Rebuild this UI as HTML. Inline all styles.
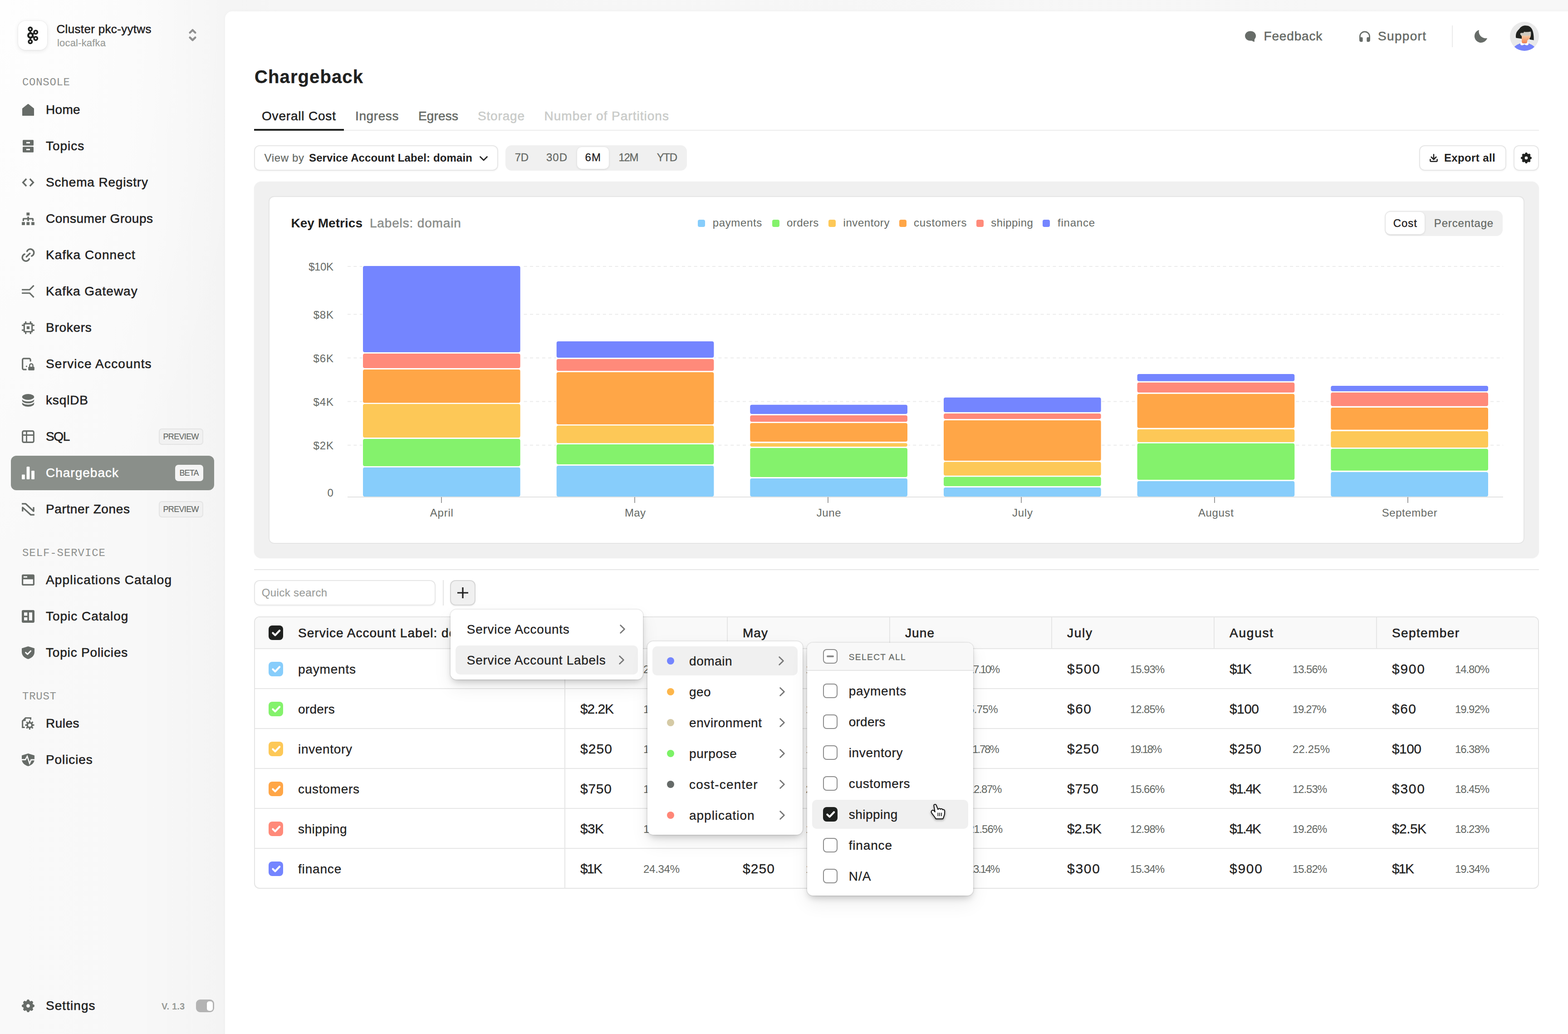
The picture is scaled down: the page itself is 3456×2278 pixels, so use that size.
<!DOCTYPE html>
<html lang="en"><head><meta charset="utf-8"><title>Chargeback</title><meta name="viewport" content="width=3456"><style>
*{box-sizing:border-box;margin:0;padding:0}
html{overflow:hidden;background:#f7f7f7}
body{width:3456px;height:2278px;overflow:hidden;background:#f7f7f7}
body{font-family:"Liberation Sans",sans-serif}
#app{position:relative;width:3456px;height:2278px;overflow:hidden;transform-origin:0 0;font-family:"Liberation Sans",sans-serif;background:radial-gradient(ellipse 560px 1300px at 0 0,#fefefe 0,rgba(254,254,254,0) 100%),linear-gradient(90deg,#f9f9f9 0,#f8f8f8 300px,#f5f5f5 440px,#f4f4f4 496px,#f6f6f6 620px,#f7f7f7 100%)}
.abs,.t,.ic{position:absolute}
.sb,.mp,.popups,nav,header,footer,section,.cluster,[role=table],[role=menu]{left:0;top:0;width:0;height:0}
.t{white-space:pre;line-height:1;font-weight:400;text-decoration:none;font-style:normal}
.ic{overflow:visible}
</style></head>
<body>
<div id="app">
<aside class="abs sb"><div class="abs cluster"><div class="abs" style="left:40px;top:46px;width:64px;height:64px;background:#fff;border-radius:16px;box-shadow:0 2px 10px rgba(0,0,0,.10),0 0 0 1px rgba(0,0,0,.03);"></div><svg class="ic" style="left:59px;top:58px" width="26" height="40" viewBox="0 0 26 40" ><g fill="none" stroke="#1f211f"><g stroke-width="3.6"><circle cx="7.8" cy="6.1" r="3.7"/><circle cx="7.8" cy="33.8" r="3.7"/><circle cx="19.7" cy="12.9" r="3.7"/><circle cx="19.7" cy="26.7" r="3.7"/></g><circle cx="8.2" cy="20" r="5" stroke-width="4.4"/><path stroke-width="3.4" d="M7.9 10 V14.8 M7.9 25.2 V30 M12.6 17.4 L16.6 15 M12.6 22.6 L16.6 24.8"/></g></svg><span class="t" style="left:124.5px;top:51.0px;font-size:26px;color:#1f211f;letter-spacing:0.33px;-webkit-text-stroke:0.52px #1f211f;">Cluster pkc-yytws</span><span class="t" style="left:126.0px;top:84.4px;font-size:22px;color:#979a97;letter-spacing:0.18px;-webkit-text-stroke:0.15px #979a97;">local-kafka</span><svg class="ic" style="left:415.5px;top:62.6px" width="17" height="28" viewBox="0 0 17 28" ><path d="M2.6 9 L8.5 3.2 L14.4 9 M2.6 19.6 L8.5 25.4 L14.4 19.6" fill="none" stroke="#8f8f8f" stroke-width="4.4" stroke-linecap="round" stroke-linejoin="round"/></svg></div><nav class="abs"><h6 class="t" style="left:49.0px;top:170.0px;font-size:24px;color:#8e908e;letter-spacing:0.7px;font-family:'Liberation Mono', monospace;">CONSOLE</h6><svg class="ic" style="left:48px;top:228px" width="28" height="28" viewBox="0 0 28 28" overflow="visible"><path d="M14 1.6 L26.3 11.2 V26.3 H1.7 V11.2 Z" fill="#676c68" stroke="#676c68" stroke-width="1.4" stroke-linejoin="round"/></svg><a class="t" style="left:101.0px;top:228.3px;font-size:28px;color:#1f211f;letter-spacing:0.3px;-webkit-text-stroke:0.56px #1f211f;">Home</a><svg class="ic" style="left:48px;top:308px" width="28" height="28" viewBox="0 0 28 28" overflow="visible"><path fill-rule="evenodd" fill="#676c68" d="M3.5 0.3h21a1.5 1.5 0 0 1 1.5 1.5v9.4a1.5 1.5 0 0 1-1.5 1.5h-21a1.5 1.5 0 0 1-1.5-1.5v-9.4a1.5 1.5 0 0 1 1.5-1.5z M10 4.8v3.2h8v-3.2z M3.5 15.3h21a1.5 1.5 0 0 1 1.5 1.5v9.4a1.5 1.5 0 0 1-1.5 1.5h-21a1.5 1.5 0 0 1-1.5-1.5v-9.4a1.5 1.5 0 0 1 1.5-1.5z M10 19.8v3.2h8v-3.2z"/></svg><a class="t" style="left:101.0px;top:308.3px;font-size:28px;color:#1f211f;letter-spacing:0.98px;-webkit-text-stroke:0.56px #1f211f;">Topics</a><svg class="ic" style="left:48px;top:388px" width="28" height="28" viewBox="0 0 28 28" overflow="visible"><path d="M10.2 6 L2.6 14 L10.2 22 M17.8 6 L25.4 14 L17.8 22" fill="none" stroke="#676c68" stroke-width="3.4" stroke-linecap="butt" stroke-linejoin="miter"/></svg><a class="t" style="left:101.0px;top:388.3px;font-size:28px;color:#1f211f;letter-spacing:0.84px;-webkit-text-stroke:0.56px #1f211f;">Schema Registry</a><svg class="ic" style="left:48px;top:468px" width="28" height="28" viewBox="0 0 28 28" overflow="visible"><g fill="#676c68"><rect x="10.4" y="0.3" width="6.8" height="6.4"/><rect x="12.3" y="9.1" width="3.5" height="9.8" rx="0.6"/><path d="M1.8 18.9 V14.4 a2.2 2.2 0 0 1 2.2 -2.2 H23.9 a2.2 2.2 0 0 1 2.2 2.2 V18.9 H22.9 V15.6 H5 V18.9 Z"/><rect x="0.1" y="21.2" width="6.8" height="6.7"/><rect x="10.4" y="21.2" width="6.8" height="6.7"/><rect x="21.1" y="21.2" width="6.8" height="6.7"/></g></svg><a class="t" style="left:101.0px;top:468.3px;font-size:28px;color:#1f211f;letter-spacing:0.52px;-webkit-text-stroke:0.56px #1f211f;">Consumer Groups</a><svg class="ic" style="left:48px;top:548px" width="28" height="28" viewBox="0 0 28 28" overflow="visible"><g fill="none" stroke="#676c68" stroke-width="3.4" stroke-linecap="round"><path d="M11.6 5.7 A7.9 7.9 0 1 1 21.7 16.1"/><path d="M16.4 22.3 A7.9 7.9 0 1 1 6.3 11.9"/><path d="M10.2 17.8 L17.8 10.2"/></g></svg><a class="t" style="left:101.0px;top:548.3px;font-size:28px;color:#1f211f;letter-spacing:1.09px;-webkit-text-stroke:0.56px #1f211f;">Kafka Connect</a><svg class="ic" style="left:48px;top:628px" width="28" height="28" viewBox="0 0 28 28" overflow="visible"><path d="M0.1 10.2 H17.4 L26.6 0.8 M0.1 17.7 H17.4 L26.6 27.1" fill="none" stroke="#676c68" stroke-width="3.1" stroke-linejoin="round"/></svg><a class="t" style="left:101.0px;top:628.3px;font-size:28px;color:#1f211f;letter-spacing:0.98px;-webkit-text-stroke:0.56px #1f211f;">Kafka Gateway</a><svg class="ic" style="left:48px;top:708px" width="28" height="28" viewBox="0 0 28 28" overflow="visible"><g fill="#676c68"><path fill-rule="evenodd" d="M5.3 3.6h17.4a1.5 1.5 0 0 1 1.5 1.5v17.6a1.5 1.5 0 0 1-1.5 1.5h-17.4a1.5 1.5 0 0 1-1.5-1.5v-17.6a1.5 1.5 0 0 1 1.5-1.5z M6.9 6.8v14.4h14.2v-14.4z"/><rect x="10.8" y="10.8" width="6.3" height="6.3"/><rect x="7.1" y="0.1" width="3.1" height="4.5"/><rect x="17.7" y="0.1" width="3.2" height="4.5"/><rect x="7.1" y="23.4" width="3.1" height="4.5"/><rect x="17.7" y="23.4" width="3.2" height="4.5"/><rect x="0.1" y="7.1" width="4.5" height="3.1"/><rect x="0.1" y="17.7" width="4.5" height="3.2"/><rect x="23.4" y="7.1" width="4.5" height="3.1"/><rect x="23.4" y="17.7" width="4.5" height="3.2"/></g></svg><a class="t" style="left:101.0px;top:708.3px;font-size:28px;color:#1f211f;letter-spacing:0.72px;-webkit-text-stroke:0.56px #1f211f;">Brokers</a><svg class="ic" style="left:48px;top:788px" width="28" height="28" viewBox="0 0 28 28" overflow="visible"><path d="M19.1 8.6 V4.6 a2.8 2.8 0 0 0 -2.8 -2.8 H4.5 a2.8 2.8 0 0 0 -2.8 2.8 V23.4 a2.8 2.8 0 0 0 2.8 2.8 H10.5" fill="none" stroke="#676c68" stroke-width="3.2"/><circle cx="10.4" cy="19.1" r="1.6" fill="#676c68"/><rect x="14.2" y="20" width="13.7" height="7.9" rx="1.6" fill="#676c68"/><path d="M17.4 20.6 V17 a3.55 3.55 0 0 1 7.1 0 V20.6" fill="none" stroke="#676c68" stroke-width="2.6"/></svg><a class="t" style="left:101.0px;top:788.3px;font-size:28px;color:#1f211f;letter-spacing:1.19px;-webkit-text-stroke:0.56px #1f211f;">Service Accounts</a><svg class="ic" style="left:48px;top:868px" width="28" height="28" viewBox="0 0 28 28" overflow="visible"><g fill="#676c68"><ellipse cx="14" cy="6.5" rx="13.2" ry="6.4"/><path d="M0.8 11.4 C2 14.6 8 16.4 14 16.4 S26 14.6 27.2 11.4 V14.4 C27.2 17.6 21.5 20.6 14 20.6 S0.8 17.6 0.8 14.4 Z"/><path d="M0.8 18.2 C2 21.5 8 23.4 14 23.4 S26 21.5 27.2 18.2 V21.4 C27.2 24.8 21.5 27.9 14 27.9 S0.8 24.8 0.8 21.4 Z"/></g></svg><a class="t" style="left:101.0px;top:868.3px;font-size:28px;color:#1f211f;letter-spacing:0.86px;-webkit-text-stroke:0.56px #1f211f;">ksqlDB</a><svg class="ic" style="left:48px;top:948px" width="28" height="28" viewBox="0 0 28 28" overflow="visible"><rect x="1.65" y="1.65" width="24.7" height="24.7" rx="2.8" fill="none" stroke="#676c68" stroke-width="3.1"/><path d="M1.7 10.5 H26.3 M10.5 1.7 V26.3" stroke="#676c68" stroke-width="2.8" fill="none"/></svg><a class="t" style="left:101.0px;top:948.3px;font-size:28px;color:#1f211f;letter-spacing:-1.37px;-webkit-text-stroke:0.56px #1f211f;">SQL</a><div class="abs" style="left:24px;top:1004px;width:448px;height:76px;background:#8a8f8a;border-radius:12px;"></div><svg class="ic" style="left:48px;top:1028px" width="28" height="28" viewBox="0 0 28 28" overflow="visible"><g fill="#fff"><rect x="0" y="17.4" width="6.8" height="10.6" rx="1.2"/><rect x="10.6" y="0" width="6.8" height="28" rx="1.6"/><rect x="21.2" y="9" width="6.8" height="19" rx="1.2"/></g></svg><a class="t" style="left:101.0px;top:1028.3px;font-size:28px;color:#fff;letter-spacing:1.0px;-webkit-text-stroke:0.56px #fff;">Chargeback</a><svg class="ic" style="left:48px;top:1108px" width="28" height="28" viewBox="0 0 28 28" overflow="visible"><path d="M0.1 1.8 H8.4 L26.1 18.2 V9.2 M1.8 18.8 V9.9 L19.8 26.2 H27.9" fill="none" stroke="#676c68" stroke-width="3.3" stroke-linejoin="round"/></svg><a class="t" style="left:101.0px;top:1108.3px;font-size:28px;color:#1f211f;letter-spacing:0.63px;-webkit-text-stroke:0.56px #1f211f;">Partner Zones</a><div class="abs" style="left:350px;top:944px;width:98px;height:36px;background:#f1f1f1;border-radius:7px;box-shadow:inset 0 0 0 2px #e4e4e4;"></div><span class="t" style="left:359.5px;top:953.2px;font-size:18px;color:#646864;letter-spacing:-0.67px;-webkit-text-stroke:0.15px #646864;">PREVIEW</span><div class="abs" style="left:386px;top:1024px;width:62px;height:36px;background:#f4f4f4;border-radius:7px;box-shadow:none;"></div><span class="t" style="left:395.5px;top:1033.2px;font-size:18px;color:#646864;letter-spacing:-0.9px;-webkit-text-stroke:0.15px #646864;">BETA</span><div class="abs" style="left:350px;top:1104px;width:98px;height:36px;background:#f1f1f1;border-radius:7px;box-shadow:inset 0 0 0 2px #e4e4e4;"></div><span class="t" style="left:359.5px;top:1113.2px;font-size:18px;color:#646864;letter-spacing:-0.67px;-webkit-text-stroke:0.15px #646864;">PREVIEW</span></nav><nav class="abs"><h6 class="t" style="left:49.0px;top:1207.0px;font-size:24px;color:#8e908e;letter-spacing:0.92px;font-family:'Liberation Mono', monospace;">SELF-SERVICE</h6><svg class="ic" style="left:48px;top:1264px" width="28" height="28" viewBox="0 0 28 28" overflow="visible"><path fill-rule="evenodd" fill="#676c68" d="M3 1.6h22a3 3 0 0 1 3 3v18.4a3 3 0 0 1-3 3h-22a3 3 0 0 1-3-3v-18.4a3 3 0 0 1 3-3z M3.2 12.2v10.6h21.6v-10.6z M3.9 5.4v3.2h8.1v-3.2z"/></svg><a class="t" style="left:101.0px;top:1264.3px;font-size:28px;color:#1f211f;letter-spacing:1.15px;-webkit-text-stroke:0.56px #1f211f;">Applications Catalog</a><svg class="ic" style="left:48px;top:1344px" width="28" height="28" viewBox="0 0 28 28" overflow="visible"><path fill-rule="evenodd" fill="#676c68" d="M3 0h22a3 3 0 0 1 3 3v22a3 3 0 0 1-3 3h-22a3 3 0 0 1-3-3v-22a3 3 0 0 1 3-3z M5 5.2v7.2h7.2v-7.2z M5 16v6.8h7.2v-6.8z M16 5.2v17.6h7v-17.6z"/></svg><a class="t" style="left:101.0px;top:1344.3px;font-size:28px;color:#1f211f;letter-spacing:0.97px;-webkit-text-stroke:0.56px #1f211f;">Topic Catalog</a><svg class="ic" style="left:48px;top:1424px" width="28" height="28" viewBox="0 0 28 28" overflow="visible"><path d="M14 0 L28 4.2 V12.5 C28 20 22.5 25.6 14 28 C5.5 25.6 0 20 0 12.5 V4.2 Z" fill="#676c68"/><path d="M8.6 13.6 L12.6 17.4 L19.6 10.2" fill="none" stroke="#fafafa" stroke-width="3" stroke-linecap="round" stroke-linejoin="round"/></svg><a class="t" style="left:101.0px;top:1424.3px;font-size:28px;color:#1f211f;letter-spacing:0.82px;-webkit-text-stroke:0.56px #1f211f;">Topic Policies</a></nav><nav class="abs"><h6 class="t" style="left:49.0px;top:1523.0px;font-size:24px;color:#8e908e;letter-spacing:0.75px;font-family:'Liberation Mono', monospace;">TRUST</h6><svg class="ic" style="left:48px;top:1580px" width="28" height="28" viewBox="0 0 28 28" overflow="visible"><path d="M19.5 5.6 V1.7 H8.3 L1.7 8.3 V22.5 H6.6" fill="none" stroke="#676c68" stroke-width="3.1" stroke-linejoin="miter"/><path d="M8.6 0.4 V8.6 H0.4 Z" fill="#676c68"/><path fill-rule="evenodd" d="M15.61 10.74 L16.05 7.29 L18.75 7.29 L19.19 10.74 L20.85 11.42 L23.60 9.30 L25.50 11.20 L23.38 13.95 L24.06 15.61 L27.51 16.05 L27.51 18.75 L24.06 19.19 L23.38 20.85 L25.50 23.60 L23.60 25.50 L20.85 23.38 L19.19 24.06 L18.75 27.51 L16.05 27.51 L15.61 24.06 L13.95 23.38 L11.20 25.50 L9.30 23.60 L11.42 20.85 L10.74 19.19 L7.29 18.75 L7.29 16.05 L10.74 15.61 L11.42 13.95 L9.30 11.20 L11.20 9.30 L13.95 11.42Z M20.90 17.40 a3.5 3.5 0 1 0 -7.00 0 a3.5 3.5 0 1 0 7.00 0Z" fill="#676c68"/></svg><a class="t" style="left:101.0px;top:1580.3px;font-size:28px;color:#1f211f;letter-spacing:0.5px;-webkit-text-stroke:0.56px #1f211f;">Rules</a><svg class="ic" style="left:48px;top:1660px" width="28" height="28" viewBox="0 0 28 28" overflow="visible"><path d="M14 0 L28 4.2 V12.5 C28 20 22.5 25.6 14 28 C5.5 25.6 0 20 0 12.5 V4.2 Z" fill="#676c68"/><path d="M-1 13.6 H8 L12 6.2 L17.2 21.6 L20.6 13.9 H29" fill="none" stroke="#fafafa" stroke-width="2.6" stroke-linejoin="miter"/></svg><a class="t" style="left:101.0px;top:1660.3px;font-size:28px;color:#1f211f;letter-spacing:0.89px;-webkit-text-stroke:0.56px #1f211f;">Policies</a></nav><footer class="abs"><svg class="ic" style="left:48px;top:2202px" width="28" height="28" viewBox="0 0 28 28" overflow="visible"><path fill-rule="evenodd" d="M10.76 3.80 L12.26 0.61 L15.74 0.61 L17.24 3.80 L18.92 4.50 L22.24 3.30 L24.70 5.76 L23.50 9.08 L24.20 10.76 L27.39 12.26 L27.39 15.74 L24.20 17.24 L23.50 18.92 L24.70 22.24 L22.24 24.70 L18.92 23.50 L17.24 24.20 L15.74 27.39 L12.26 27.39 L10.76 24.20 L9.08 23.50 L5.76 24.70 L3.30 22.24 L4.50 18.92 L3.80 17.24 L0.61 15.74 L0.61 12.26 L3.80 10.76 L4.50 9.08 L3.30 5.76 L5.76 3.30 L9.08 4.50Z M18.30 14.00 a4.3 4.3 0 1 0 -8.60 0 a4.3 4.3 0 1 0 8.60 0Z" fill="#676c68" stroke="#676c68" stroke-width="0.9" stroke-linejoin="round"/></svg><a class="t" style="left:101.0px;top:2202.3px;font-size:28px;color:#1f211f;letter-spacing:1.05px;-webkit-text-stroke:0.56px #1f211f;">Settings</a><span class="t" style="left:356.0px;top:2207.1px;font-size:20px;color:#979a97;font-weight:700;letter-spacing:0.12px;">V. 1.3</span><div class="abs" style="left:432px;top:2202px;width:40px;height:28px;background:#b3b3b3;border-radius:9px;"><i class="abs" style="left:23.5px;top:3.5px;width:13px;height:21px;border-radius:5px;background:#fff"></i></div></footer></aside><main class="abs mp"><div class="abs" style="left:496px;top:24.5px;width:2984px;height:2300px;background:#fff;border-radius:16px 0 0 0;box-shadow:0 0 10px rgba(0,0,0,.03);"></div><header class="abs"><svg class="ic" style="left:2744px;top:67.5px" width="25" height="25" viewBox="0 0 25 25" overflow="visible"><path d="M12.1 0.4 C19 0.4 24.1 5 24.1 11.1 C24.1 14 22.9 16.4 21.1 18.2 L20.7 24.4 L14.4 21.6 C13.7 21.7 12.9 21.8 12.1 21.8 C5.2 21.8 0.1 17.2 0.1 11.1 C0.1 5 5.2 0.4 12.1 0.4 Z" fill="#676c68"/></svg><a class="t" style="left:2785.5px;top:66.3px;font-size:28px;color:#666a66;letter-spacing:0.83px;-webkit-text-stroke:0.56px #666a66;">Feedback</a><svg class="ic" style="left:2996px;top:67.5px" width="24" height="25" viewBox="0 0 24 25" ><path d="M1.4 17 V12.4 a10.6 10.6 0 0 1 21.2 0 V17" fill="none" stroke="#676c68" stroke-width="2.7"/><path d="M0.1 13.9 H5.4 a2.2 2.2 0 0 1 2.2 2.2 V22.3 a2 2 0 0 1 -2 2 H4.1 a4 4 0 0 1 -4 -4 Z M23.9 13.9 H18.6 a2.2 2.2 0 0 0 -2.2 2.2 V22.3 a2 2 0 0 0 2 2 H19.9 a4 4 0 0 0 4 -4 Z" fill="#676c68"/></svg><a class="t" style="left:3037.0px;top:66.3px;font-size:28px;color:#666a66;letter-spacing:1.32px;-webkit-text-stroke:0.56px #666a66;">Support</a><div class="abs" style="left:3200px;top:56px;width:2px;height:48px;background:#ebebeb;"></div><svg class="ic" style="left:3250px;top:66px" width="28" height="28" viewBox="0 0 28 28" ><path d="M9.9 -0.1 A14.4 14.4 0 1 0 28 17.9 A15 15 0 0 1 9.9 -0.1 Z" fill="#676c68"/></svg><svg class="ic" style="left:3328px;top:48px" width="64" height="64" viewBox="0 0 64 64" ><defs><clipPath id="avc"><circle cx="32" cy="32" r="32"/></clipPath><linearGradient id="avg" x1="0" y1="0" x2="0" y2="1"><stop offset="0" stop-color="#f3c9a4"/><stop offset="1" stop-color="#f5814b"/></linearGradient></defs><circle cx="32" cy="32" r="32" fill="#e9e9e9"/><g clip-path="url(#avc)"><path d="M34.3 8.3 C41 8.3 46 11 48.5 16 C51.5 21.5 52.7 29 52.7 40.5 L44 39 L40 33 L27 37.5 L13.2 35.6 C12.6 31 13 26 15 22.5 C16.5 20 19 17.5 21 15.5 C23.5 11 28.5 8.3 34.3 8.3 Z" fill="#20221f"/><path d="M31 22.1 C36 23 41 22.6 46 21.6 C46.6 25.5 46.4 29 45.6 32.5 L26.5 32.5 C25 30 23.4 29.6 22.8 27.5 C22.4 25.8 23.4 24.6 25 24.6 L30 24.4 Z" fill="#cdc9c0"/><path d="M26 30.5 L45.6 30.5 C45.4 34 44 37 41.5 38.5 L38 41.5 L38 47.6 L26.2 47.6 Z" fill="url(#avg)"/><path d="M9.9 66 L9.9 55 C14 51.5 18 49.3 22.8 47.6 L41.2 47.6 C46 49.3 50 51.5 53.9 55 L53.9 66 Z" fill="#7482fb"/><path d="M23.6 44.8 L26.2 45.6 C26.6 47.2 28.4 48 32 48 C35.6 48 37.4 47.2 37.8 45.6 L40.4 44.8 C41.4 47.2 41.2 49.6 40.2 50.8 C38.2 52.4 35.2 52 32 49.8 C28.8 52 25.8 52.4 23.8 50.8 C22.8 49.6 22.6 47.2 23.6 44.8 Z" fill="#fdfdfd"/></g></svg><h1 class="t" style="left:561.0px;top:148.5px;font-size:40px;color:#1f211f;font-weight:700;letter-spacing:1.11px;-webkit-text-stroke:0.3px #1f211f;">Chargeback</h1></header><nav class="abs tabs"><div class="abs" style="left:560px;top:286px;width:2832px;height:2px;background:#ececec;"></div><div class="abs" style="left:560px;top:284px;width:198px;height:4px;background:#1f211f;"></div><a class="t" style="left:577.0px;top:242.3px;font-size:28px;color:#1f211f;letter-spacing:0.81px;-webkit-text-stroke:0.56px #1f211f;">Overall Cost</a><a class="t" style="left:783.0px;top:242.3px;font-size:28px;color:#666a66;letter-spacing:0.6px;-webkit-text-stroke:0.56px #666a66;">Ingress</a><a class="t" style="left:922.0px;top:242.3px;font-size:28px;color:#666a66;letter-spacing:0.17px;-webkit-text-stroke:0.56px #666a66;">Egress</a><a class="t" style="left:1053.0px;top:242.3px;font-size:28px;color:#c9cbc9;letter-spacing:0.82px;-webkit-text-stroke:0.56px #c9cbc9;">Storage</a><a class="t" style="left:1199.5px;top:242.3px;font-size:28px;color:#c9cbc9;letter-spacing:1.01px;-webkit-text-stroke:0.56px #c9cbc9;">Number of Partitions</a></nav><section class="abs toolbar"><div class="abs" style="left:560px;top:320px;width:538px;height:56px;background:#fff;border-radius:12px;box-shadow:inset 0 0 0 2px #e6e6e6,0 2px 3px rgba(0,0,0,.035);"></div><span class="t" style="left:582.5px;top:335.7px;font-size:24px;color:#666a66;letter-spacing:0.65px;-webkit-text-stroke:0.25px #666a66;">View by</span><span class="t" style="left:681.0px;top:335.7px;font-size:24px;color:#1f211f;font-weight:700;letter-spacing:0.12px;">Service Account Label: domain</span><svg class="ic" style="left:1057px;top:343.5px" width="18" height="10.5" viewBox="0 0 18 10.5" ><path d="M1.5 1.5 L9 9 L16.5 1.5" fill="none" stroke="#222" stroke-width="2.8" stroke-linecap="round" stroke-linejoin="round"/></svg><div class="abs" style="left:1114px;top:320px;width:400px;height:56px;background:#f0f0f0;border-radius:14px;"></div><div class="abs" style="left:1272px;top:324px;width:70px;height:48px;background:#fff;border-radius:10px;box-shadow:0 1px 4px rgba(0,0,0,.12);"></div><span class="t" style="left:1134.7px;top:335.3px;font-size:24px;color:#666a66;letter-spacing:-0.39px;-webkit-text-stroke:0.3px #666a66;">7D</span><span class="t" style="left:1204.0px;top:335.3px;font-size:24px;color:#666a66;letter-spacing:0.98px;-webkit-text-stroke:0.3px #666a66;">30D</span><b class="t" style="left:1289.5px;top:335.3px;font-size:24px;color:#1f211f;letter-spacing:1.16px;-webkit-text-stroke:0.3px #1f211f;">6M</b><span class="t" style="left:1363.5px;top:335.3px;font-size:24px;color:#666a66;letter-spacing:-1.29px;-webkit-text-stroke:0.3px #666a66;">12M</span><span class="t" style="left:1447.7px;top:335.3px;font-size:24px;color:#666a66;letter-spacing:-1.35px;-webkit-text-stroke:0.3px #666a66;">YTD</span><div class="abs" style="left:3128px;top:320px;width:192px;height:56px;background:#fff;border-radius:12px;box-shadow:inset 0 0 0 2px #e6e6e6,0 2px 3px rgba(0,0,0,.035);"></div><svg class="ic" style="left:3151px;top:339.5px" width="18" height="17" viewBox="0 0 18 17" ><path d="M9 0.4 V11 M3.7 6 L9 11.4 L14.3 6" fill="none" stroke="#222" stroke-width="2.6" stroke-linejoin="miter" stroke-linecap="round"/><path d="M1.4 11.2 V13.8 a2 2 0 0 0 2 2 H14.6 a2 2 0 0 0 2 -2 V11.2" fill="none" stroke="#222" stroke-width="2.6" stroke-linecap="round"/></svg><span class="t" style="left:3183.0px;top:335.7px;font-size:24px;color:#1f211f;font-weight:700;letter-spacing:0.36px;">Export all</span><div class="abs" style="left:3336px;top:320px;width:56px;height:56px;background:#fff;border-radius:12px;box-shadow:inset 0 0 0 2px #e6e6e6,0 2px 3px rgba(0,0,0,.035);"></div><svg class="ic" style="left:3352px;top:335.7px" width="24" height="24" viewBox="0 0 28 28" ><path fill-rule="evenodd" d="M10.76 3.80 L12.26 0.61 L15.74 0.61 L17.24 3.80 L18.92 4.50 L22.24 3.30 L24.70 5.76 L23.50 9.08 L24.20 10.76 L27.39 12.26 L27.39 15.74 L24.20 17.24 L23.50 18.92 L24.70 22.24 L22.24 24.70 L18.92 23.50 L17.24 24.20 L15.74 27.39 L12.26 27.39 L10.76 24.20 L9.08 23.50 L5.76 24.70 L3.30 22.24 L4.50 18.92 L3.80 17.24 L0.61 15.74 L0.61 12.26 L3.80 10.76 L4.50 9.08 L3.30 5.76 L5.76 3.30 L9.08 4.50Z M18.40 14.00 a4.4 4.4 0 1 0 -8.80 0 a4.4 4.4 0 1 0 8.80 0Z" fill="#1f211f" stroke="#1f211f" stroke-width="0.9" stroke-linejoin="round"/></svg></section><section class="abs chart"><div class="abs" style="left:560px;top:400px;width:2832px;height:830px;background:#f0f0f0;border-radius:16px;box-shadow:0 0 2px 0 #f0f0f0;"></div><div class="abs" style="left:592px;top:432px;width:2768px;height:766px;background:#fff;border-radius:12px;box-shadow:inset 0 0 0 2px #e5e5e5,inset 0 2px 0 0 #dedede;"></div><h3 class="t" style="left:641.4px;top:478.3px;font-size:28px;color:#1f211f;font-weight:700;letter-spacing:0.04px;">Key Metrics</h3><span class="t" style="left:814.9px;top:478.3px;font-size:28px;color:#8b8e8b;letter-spacing:0.85px;-webkit-text-stroke:0.56px #8b8e8b;">Labels: domain</span><div class="abs" style="left:1538px;top:484px;width:16px;height:16px;background:#87cdfb;border-radius:4px;"></div><span class="t" style="left:1570.7px;top:478.9px;font-size:24px;color:#666a66;letter-spacing:0.65px;">payments</span><div class="abs" style="left:1702px;top:484px;width:16px;height:16px;background:#84f26c;border-radius:4px;"></div><span class="t" style="left:1734.0px;top:478.9px;font-size:24px;color:#666a66;letter-spacing:0.45px;">orders</span><div class="abs" style="left:1826px;top:484px;width:16px;height:16px;background:#fdc857;border-radius:4px;"></div><span class="t" style="left:1858.6px;top:478.9px;font-size:24px;color:#666a66;letter-spacing:0.55px;">inventory</span><div class="abs" style="left:1982px;top:484px;width:16px;height:16px;background:#ffa647;border-radius:4px;"></div><span class="t" style="left:2014.0px;top:478.9px;font-size:24px;color:#666a66;letter-spacing:0.72px;">customers</span><div class="abs" style="left:2152px;top:484px;width:16px;height:16px;background:#ff8a7a;border-radius:4px;"></div><span class="t" style="left:2184.3px;top:478.9px;font-size:24px;color:#666a66;letter-spacing:0.44px;">shipping</span><div class="abs" style="left:2298px;top:484px;width:16px;height:16px;background:#7485ff;border-radius:4px;"></div><span class="t" style="left:2331.0px;top:478.9px;font-size:24px;color:#666a66;letter-spacing:0.77px;">finance</span><div class="abs" style="left:3052px;top:464px;width:260px;height:56px;background:#f0f0f0;border-radius:14px;"></div><div class="abs" style="left:3053.5px;top:467px;width:86.5px;height:49px;background:#fff;border-radius:10px;box-shadow:0 1px 4px rgba(0,0,0,.12);"></div><span class="t" style="left:3070.7px;top:479.7px;font-size:24px;color:#1f211f;letter-spacing:0.98px;-webkit-text-stroke:0.4px #1f211f;">Cost</span><span class="t" style="left:3160.8px;top:479.7px;font-size:24px;color:#666a66;letter-spacing:0.85px;-webkit-text-stroke:0.3px #666a66;">Percentage</span><svg class="abs" style="left:0;top:0" width="3456" height="1200" viewBox="0 0 3456 1200"><path d="M766 587 H3313" stroke="#ebebeb" stroke-width="2" stroke-dasharray="7 6.4" fill="none"/><path d="M766 692.5 H3313" stroke="#ebebeb" stroke-width="2" stroke-dasharray="7 6.4" fill="none"/><path d="M766 788.5 H3313" stroke="#ebebeb" stroke-width="2" stroke-dasharray="7 6.4" fill="none"/><path d="M766 884.6 H3313" stroke="#ebebeb" stroke-width="2" stroke-dasharray="7 6.4" fill="none"/><path d="M766 980.7 H3313" stroke="#ebebeb" stroke-width="2" stroke-dasharray="7 6.4" fill="none"/><rect x="798.5" y="584.5" width="349.7" height="193.0" fill="#fff"/><rect x="798.5" y="777.5" width="349.7" height="35.0" fill="#fff"/><rect x="798.5" y="812.5" width="349.7" height="76.4" fill="#fff"/><rect x="798.5" y="888.5" width="349.7" height="77.0" fill="#fff"/><rect x="798.5" y="965.5" width="349.7" height="63.0" fill="#fff"/><rect x="798.5" y="1028.2" width="349.7" height="67.3" fill="#fff"/><rect x="800.0" y="586.0" width="346.7" height="190.0" rx="4.0" fill="#7485ff"/><rect x="800.0" y="779.0" width="346.7" height="32.0" rx="4.0" fill="#ff8a7a"/><rect x="800.0" y="814.0" width="346.7" height="73.4" rx="4.0" fill="#ffa647"/><rect x="800.0" y="890.0" width="346.7" height="74.0" rx="4.0" fill="#fdc857"/><rect x="800.0" y="967.0" width="346.7" height="60.0" rx="4.0" fill="#84f26c"/><rect x="800.0" y="1029.7" width="346.7" height="64.3" rx="4.0" fill="#87cdfb"/><rect x="1225.2" y="750.5" width="349.7" height="39.0" fill="#fff"/><rect x="1225.2" y="789.5" width="349.7" height="29.0" fill="#fff"/><rect x="1225.2" y="818.5" width="349.7" height="118.0" fill="#fff"/><rect x="1225.2" y="936.1" width="349.7" height="41.6" fill="#fff"/><rect x="1225.2" y="977.5" width="349.7" height="47.0" fill="#fff"/><rect x="1225.2" y="1024.5" width="349.7" height="71.0" fill="#fff"/><rect x="1226.7" y="752.0" width="346.7" height="36.0" rx="4.0" fill="#7485ff"/><rect x="1226.7" y="791.0" width="346.7" height="26.0" rx="4.0" fill="#ff8a7a"/><rect x="1226.7" y="820.0" width="346.7" height="115.0" rx="4.0" fill="#ffa647"/><rect x="1226.7" y="937.6" width="346.7" height="38.6" rx="4.0" fill="#fdc857"/><rect x="1226.7" y="979.0" width="346.7" height="44.0" rx="4.0" fill="#84f26c"/><rect x="1226.7" y="1026.0" width="346.7" height="68.0" rx="4.0" fill="#87cdfb"/><rect x="1651.8" y="890.3" width="349.7" height="23.2" fill="#fff"/><rect x="1651.8" y="913.5" width="349.7" height="17.3" fill="#fff"/><rect x="1651.8" y="930.5" width="349.7" height="44.0" fill="#fff"/><rect x="1651.8" y="974.7" width="349.7" height="10.8" fill="#fff"/><rect x="1651.8" y="985.5" width="349.7" height="67.0" fill="#fff"/><rect x="1651.8" y="1052.5" width="349.7" height="43.0" fill="#fff"/><rect x="1653.3" y="891.8" width="346.7" height="20.2" rx="4.0" fill="#7485ff"/><rect x="1653.3" y="915.0" width="346.7" height="14.3" rx="4.0" fill="#ff8a7a"/><rect x="1653.3" y="932.0" width="346.7" height="41.0" rx="4.0" fill="#ffa647"/><rect x="1653.3" y="976.2" width="346.7" height="7.8" rx="3.9" fill="#fdc857"/><rect x="1653.3" y="987.0" width="346.7" height="64.0" rx="4.0" fill="#84f26c"/><rect x="1653.3" y="1054.0" width="346.7" height="40.0" rx="4.0" fill="#87cdfb"/><rect x="2078.5" y="874.2" width="349.7" height="35.3" fill="#fff"/><rect x="2078.5" y="909.5" width="349.7" height="15.0" fill="#fff"/><rect x="2078.5" y="924.5" width="349.7" height="92.0" fill="#fff"/><rect x="2078.5" y="1016.1" width="349.7" height="33.2" fill="#fff"/><rect x="2078.5" y="1049.0" width="349.7" height="23.5" fill="#fff"/><rect x="2078.5" y="1072.5" width="349.7" height="23.0" fill="#fff"/><rect x="2080.0" y="875.7" width="346.7" height="32.3" rx="4.0" fill="#7485ff"/><rect x="2080.0" y="911.0" width="346.7" height="12.0" rx="4.0" fill="#ff8a7a"/><rect x="2080.0" y="926.0" width="346.7" height="89.0" rx="4.0" fill="#ffa647"/><rect x="2080.0" y="1017.6" width="346.7" height="30.2" rx="4.0" fill="#fdc857"/><rect x="2080.0" y="1050.5" width="346.7" height="20.5" rx="4.0" fill="#84f26c"/><rect x="2080.0" y="1074.0" width="346.7" height="20.0" rx="4.0" fill="#87cdfb"/><rect x="2505.1" y="822.5" width="349.7" height="18.8" fill="#fff"/><rect x="2505.1" y="841.3" width="349.7" height="24.9" fill="#fff"/><rect x="2505.1" y="866.3" width="349.7" height="77.9" fill="#fff"/><rect x="2505.1" y="944.2" width="349.7" height="31.3" fill="#fff"/><rect x="2505.1" y="975.2" width="349.7" height="83.3" fill="#fff"/><rect x="2505.1" y="1058.5" width="349.7" height="37.0" fill="#fff"/><rect x="2506.6" y="824.0" width="346.7" height="15.8" rx="4.0" fill="#7485ff"/><rect x="2506.6" y="842.8" width="346.7" height="21.9" rx="4.0" fill="#ff8a7a"/><rect x="2506.6" y="867.8" width="346.7" height="74.9" rx="4.0" fill="#ffa647"/><rect x="2506.6" y="945.7" width="346.7" height="28.3" rx="4.0" fill="#fdc857"/><rect x="2506.6" y="976.7" width="346.7" height="80.3" rx="4.0" fill="#84f26c"/><rect x="2506.6" y="1060.0" width="346.7" height="34.0" rx="4.0" fill="#87cdfb"/><rect x="2931.8" y="848.5" width="349.7" height="15.0" fill="#fff"/><rect x="2931.8" y="863.3" width="349.7" height="32.9" fill="#fff"/><rect x="2931.8" y="896.4" width="349.7" height="51.9" fill="#fff"/><rect x="2931.8" y="948.5" width="349.7" height="39.0" fill="#fff"/><rect x="2931.8" y="987.3" width="349.7" height="51.0" fill="#fff"/><rect x="2931.8" y="1038.5" width="349.7" height="57.0" fill="#fff"/><rect x="2933.3" y="850.0" width="346.7" height="12.0" rx="4.0" fill="#7485ff"/><rect x="2933.3" y="864.8" width="346.7" height="29.9" rx="4.0" fill="#ff8a7a"/><rect x="2933.3" y="897.9" width="346.7" height="48.9" rx="4.0" fill="#ffa647"/><rect x="2933.3" y="950.0" width="346.7" height="36.0" rx="4.0" fill="#fdc857"/><rect x="2933.3" y="988.8" width="346.7" height="48.0" rx="4.0" fill="#84f26c"/><rect x="2933.3" y="1040.0" width="346.7" height="54.0" rx="4.0" fill="#87cdfb"/><path d="M766 1095 H3313" stroke="#e2e2e2" stroke-width="2" fill="none"/><path d="M973 1095 V1108" stroke="#9c9c9c" stroke-width="2" fill="none"/><path d="M1399 1095 V1108" stroke="#9c9c9c" stroke-width="2" fill="none"/><path d="M1825 1095 V1108" stroke="#9c9c9c" stroke-width="2" fill="none"/><path d="M2251 1095 V1108" stroke="#9c9c9c" stroke-width="2" fill="none"/><path d="M2677 1095 V1108" stroke="#9c9c9c" stroke-width="2" fill="none"/><path d="M3103 1095 V1108" stroke="#9c9c9c" stroke-width="2" fill="none"/></svg><span class="t" style="left:680.2px;top:576.1px;font-size:24px;color:#666a66;letter-spacing:-0.42px;">$10K</span><span class="t" style="left:690.7px;top:682.0px;font-size:24px;color:#666a66;letter-spacing:0.8px;">$8K</span><span class="t" style="left:690.4px;top:778.1px;font-size:24px;color:#666a66;letter-spacing:0.95px;">$6K</span><span class="t" style="left:690.4px;top:874.2px;font-size:24px;color:#666a66;letter-spacing:0.95px;">$4K</span><span class="t" style="left:690.4px;top:970.3px;font-size:24px;color:#666a66;letter-spacing:0.95px;">$2K</span><span class="t" style="left:721.6px;top:1073.5px;font-size:24px;color:#666a66;">0</span><span class="t" style="left:947.8px;top:1117.7px;font-size:24px;color:#666a66;letter-spacing:0.75px;">April</span><span class="t" style="left:1377.0px;top:1117.7px;font-size:24px;color:#666a66;letter-spacing:0.33px;">May</span><span class="t" style="left:1799.7px;top:1117.7px;font-size:24px;color:#666a66;letter-spacing:0.65px;">June</span><span class="t" style="left:2230.9px;top:1117.7px;font-size:24px;color:#666a66;letter-spacing:0.77px;">July</span><span class="t" style="left:2640.9px;top:1117.7px;font-size:24px;color:#666a66;letter-spacing:0.66px;">August</span><span class="t" style="left:3045.7px;top:1117.7px;font-size:24px;color:#666a66;letter-spacing:0.57px;">September</span></section><section class="abs tablesec"><div class="abs" style="left:560px;top:1254px;width:2832px;height:2px;background:#e6e6e6;"></div><div class="abs" style="left:560px;top:1278px;width:400px;height:56px;background:#fff;border-radius:12px;box-shadow:inset 0 0 0 2px #e6e6e6,0 2px 3px rgba(0,0,0,.035);"></div><span class="t" style="left:576.7px;top:1294.2px;font-size:24px;color:#9a9c9a;letter-spacing:0.4px;-webkit-text-stroke:0.2px #9a9c9a;">Quick search</span><div class="abs" style="left:976px;top:1278px;width:2px;height:56px;background:#e4e4e4;"></div><div class="abs" style="left:992px;top:1278px;width:56px;height:56px;background:#f0f0f0;border-radius:12px;box-shadow:inset 0 0 0 2px #d6d6d6,0 2px 3px rgba(0,0,0,.05);"></div><svg class="ic" style="left:1008px;top:1294px" width="24" height="24" viewBox="0 0 24 24" ><path d="M12 0 V24 M0 12 H24" fill="none" stroke="#222" stroke-width="3.2"/></svg><div class="abs" role="table"><div class="abs" style="left:560px;top:1358px;width:2832px;height:600px;background:#fff;border-radius:12px;box-shadow:inset 0 0 0 2px #e4e4e4;overflow:hidden;"><div class="abs" style="left:2px;top:2px;width:2828px;height:68px;background:#f9f9f9;border-radius:10px 10px 0 0"></div></div><div class="abs" style="left:562px;top:1428px;width:2828px;height:2px;background:#e6e6e6;"></div><div class="abs" style="left:562px;top:1516px;width:2828px;height:2px;background:#e6e6e6;"></div><div class="abs" style="left:562px;top:1604px;width:2828px;height:2px;background:#e6e6e6;"></div><div class="abs" style="left:562px;top:1692px;width:2828px;height:2px;background:#e6e6e6;"></div><div class="abs" style="left:562px;top:1780px;width:2828px;height:2px;background:#e6e6e6;"></div><div class="abs" style="left:562px;top:1868px;width:2828px;height:2px;background:#e6e6e6;"></div><div class="abs" style="left:1244px;top:1360px;width:2px;height:596px;background:#e6e6e6;"></div><div class="abs" style="left:1602px;top:1360px;width:2px;height:68px;background:#e6e6e6;"></div><div class="abs" style="left:1960px;top:1360px;width:2px;height:68px;background:#e6e6e6;"></div><div class="abs" style="left:2317px;top:1360px;width:2px;height:68px;background:#e6e6e6;"></div><div class="abs" style="left:2675px;top:1360px;width:2px;height:68px;background:#e6e6e6;"></div><div class="abs" style="left:3033px;top:1360px;width:2px;height:68px;background:#e6e6e6;"></div><div class="abs" style="left:592px;top:1378px;width:32px;height:32px;background:#1f211f;border-radius:8px;"><svg width="32" height="32" viewBox="0 0 32 32" style="position:absolute;left:0;top:0"><path d="M9.4 16.4 L14.6 21.4 L24.2 11.2" fill="none" stroke="#fff" stroke-width="4.2" stroke-linecap="round" stroke-linejoin="round"/></svg></div><span class="t" style="left:657.0px;top:1380.7px;font-size:28px;color:#1f211f;letter-spacing:1.02px;-webkit-text-stroke:0.6px #1f211f;">Service Account Label: domain</span><span class="t" style="left:1279.0px;top:1380.7px;font-size:28px;color:#1f211f;letter-spacing:1.5px;-webkit-text-stroke:0.6px #1f211f;">April</span><span class="t" style="left:1637.0px;top:1380.7px;font-size:28px;color:#1f211f;letter-spacing:1.05px;-webkit-text-stroke:0.6px #1f211f;">May</span><span class="t" style="left:1995.0px;top:1380.7px;font-size:28px;color:#1f211f;letter-spacing:1.09px;-webkit-text-stroke:0.6px #1f211f;">June</span><span class="t" style="left:2352.0px;top:1380.7px;font-size:28px;color:#1f211f;letter-spacing:1.73px;-webkit-text-stroke:0.6px #1f211f;">July</span><span class="t" style="left:2710.0px;top:1380.7px;font-size:28px;color:#1f211f;letter-spacing:1.77px;-webkit-text-stroke:0.6px #1f211f;">August</span><span class="t" style="left:3068.0px;top:1380.7px;font-size:28px;color:#1f211f;letter-spacing:1.38px;-webkit-text-stroke:0.6px #1f211f;">September</span><div class="abs" style="left:592px;top:1458px;width:32px;height:32px;background:#87cdfb;border-radius:8px;"><svg width="32" height="32" viewBox="0 0 32 32" style="position:absolute;left:0;top:0"><path d="M9.4 16.4 L14.6 21.4 L24.2 11.2" fill="none" stroke="#fff" stroke-width="4.2" stroke-linecap="round" stroke-linejoin="round"/></svg></div><span class="t" style="left:657.0px;top:1461.3px;font-size:28px;color:#1f211f;letter-spacing:0.8px;-webkit-text-stroke:0.3px #1f211f;">payments</span><span class="t" style="left:1279.0px;top:1458.6px;font-size:30px;color:#1f211f;letter-spacing:1.4px;-webkit-text-stroke:0.3px #1f211f;">$1.5K</span><span class="t" style="left:1418.0px;top:1463.2px;font-size:24px;color:#646864;letter-spacing:-1.08px;">20.12%</span><span class="t" style="left:1637.0px;top:1458.6px;font-size:30px;color:#1f211f;letter-spacing:1.4px;-webkit-text-stroke:0.3px #1f211f;">$1.2K</span><span class="t" style="left:1776.0px;top:1463.2px;font-size:24px;color:#646864;letter-spacing:-1.08px;">16.40%</span><span class="t" style="left:1995.0px;top:1458.6px;font-size:30px;color:#1f211f;letter-spacing:1.4px;-webkit-text-stroke:0.3px #1f211f;">$800</span><span class="t" style="left:2134.0px;top:1463.2px;font-size:24px;color:#646864;letter-spacing:-2.28px;">17.10%</span><span class="t" style="left:2352.0px;top:1458.6px;font-size:30px;color:#1f211f;letter-spacing:1.75px;-webkit-text-stroke:0.3px #1f211f;">$500</span><span class="t" style="left:2491.0px;top:1463.2px;font-size:24px;color:#646864;letter-spacing:-1.08px;">15.93%</span><span class="t" style="left:2710.0px;top:1458.6px;font-size:30px;color:#1f211f;letter-spacing:-2.2px;-webkit-text-stroke:0.3px #1f211f;">$1K</span><span class="t" style="left:2849.0px;top:1463.2px;font-size:24px;color:#646864;letter-spacing:-1.08px;">13.56%</span><span class="t" style="left:3068.0px;top:1458.6px;font-size:30px;color:#1f211f;letter-spacing:1.75px;-webkit-text-stroke:0.3px #1f211f;">$900</span><span class="t" style="left:3207.0px;top:1463.2px;font-size:24px;color:#646864;letter-spacing:-1.08px;">14.80%</span><div class="abs" style="left:592px;top:1546px;width:32px;height:32px;background:#84f26c;border-radius:8px;"><svg width="32" height="32" viewBox="0 0 32 32" style="position:absolute;left:0;top:0"><path d="M9.4 16.4 L14.6 21.4 L24.2 11.2" fill="none" stroke="#fff" stroke-width="4.2" stroke-linecap="round" stroke-linejoin="round"/></svg></div><span class="t" style="left:657.0px;top:1549.3px;font-size:28px;color:#1f211f;letter-spacing:0.27px;-webkit-text-stroke:0.3px #1f211f;">orders</span><span class="t" style="left:1279.0px;top:1546.6px;font-size:30px;color:#1f211f;letter-spacing:-1.1px;-webkit-text-stroke:0.3px #1f211f;">$2.2K</span><span class="t" style="left:1418.0px;top:1551.2px;font-size:24px;color:#646864;letter-spacing:-1.08px;">14.21%</span><span class="t" style="left:1637.0px;top:1546.6px;font-size:30px;color:#1f211f;letter-spacing:1.75px;-webkit-text-stroke:0.3px #1f211f;">$900</span><span class="t" style="left:1776.0px;top:1551.2px;font-size:24px;color:#646864;letter-spacing:-1.08px;">13.65%</span><span class="t" style="left:1995.0px;top:1546.6px;font-size:30px;color:#1f211f;letter-spacing:1.4px;-webkit-text-stroke:0.3px #1f211f;">$1.2K</span><span class="t" style="left:2134.0px;top:1551.2px;font-size:24px;color:#646864;letter-spacing:-0.59px;">5.75%</span><span class="t" style="left:2352.0px;top:1546.6px;font-size:30px;color:#1f211f;letter-spacing:1.47px;-webkit-text-stroke:0.3px #1f211f;">$60</span><span class="t" style="left:2491.0px;top:1551.2px;font-size:24px;color:#646864;letter-spacing:-1.08px;">12.85%</span><span class="t" style="left:2710.0px;top:1546.6px;font-size:30px;color:#1f211f;letter-spacing:-0.58px;-webkit-text-stroke:0.3px #1f211f;">$100</span><span class="t" style="left:2849.0px;top:1551.2px;font-size:24px;color:#646864;letter-spacing:-1.34px;">19.27%</span><span class="t" style="left:3068.0px;top:1546.6px;font-size:30px;color:#1f211f;letter-spacing:1.47px;-webkit-text-stroke:0.3px #1f211f;">$60</span><span class="t" style="left:3207.0px;top:1551.2px;font-size:24px;color:#646864;letter-spacing:-1.08px;">19.92%</span><div class="abs" style="left:592px;top:1634px;width:32px;height:32px;background:#fdc857;border-radius:8px;"><svg width="32" height="32" viewBox="0 0 32 32" style="position:absolute;left:0;top:0"><path d="M9.4 16.4 L14.6 21.4 L24.2 11.2" fill="none" stroke="#fff" stroke-width="4.2" stroke-linecap="round" stroke-linejoin="round"/></svg></div><span class="t" style="left:657.0px;top:1637.3px;font-size:28px;color:#1f211f;letter-spacing:0.67px;-webkit-text-stroke:0.3px #1f211f;">inventory</span><span class="t" style="left:1279.0px;top:1634.6px;font-size:30px;color:#1f211f;letter-spacing:1.08px;-webkit-text-stroke:0.3px #1f211f;">$250</span><span class="t" style="left:1418.0px;top:1639.2px;font-size:24px;color:#646864;letter-spacing:-0.72px;">11.34%</span><span class="t" style="left:1637.0px;top:1634.6px;font-size:30px;color:#1f211f;letter-spacing:1.4px;-webkit-text-stroke:0.3px #1f211f;">$700</span><span class="t" style="left:1776.0px;top:1639.2px;font-size:24px;color:#646864;letter-spacing:-1.08px;">18.02%</span><span class="t" style="left:1995.0px;top:1634.6px;font-size:30px;color:#1f211f;letter-spacing:1.4px;-webkit-text-stroke:0.3px #1f211f;">$120</span><span class="t" style="left:2134.0px;top:1639.2px;font-size:24px;color:#646864;letter-spacing:-2.21px;">11.78%</span><span class="t" style="left:2352.0px;top:1634.6px;font-size:30px;color:#1f211f;letter-spacing:1.08px;-webkit-text-stroke:0.3px #1f211f;">$250</span><span class="t" style="left:2491.0px;top:1639.2px;font-size:24px;color:#646864;letter-spacing:-2.28px;">19.18%</span><span class="t" style="left:2710.0px;top:1634.6px;font-size:30px;color:#1f211f;letter-spacing:1.08px;-webkit-text-stroke:0.3px #1f211f;">$250</span><span class="t" style="left:2849.0px;top:1639.2px;font-size:24px;color:#646864;letter-spacing:0.12px;">22.25%</span><span class="t" style="left:3068.0px;top:1634.6px;font-size:30px;color:#1f211f;letter-spacing:-0.58px;-webkit-text-stroke:0.3px #1f211f;">$100</span><span class="t" style="left:3207.0px;top:1639.2px;font-size:24px;color:#646864;letter-spacing:-1.08px;">16.38%</span><div class="abs" style="left:592px;top:1722px;width:32px;height:32px;background:#ffa647;border-radius:8px;"><svg width="32" height="32" viewBox="0 0 32 32" style="position:absolute;left:0;top:0"><path d="M9.4 16.4 L14.6 21.4 L24.2 11.2" fill="none" stroke="#fff" stroke-width="4.2" stroke-linecap="round" stroke-linejoin="round"/></svg></div><span class="t" style="left:657.0px;top:1725.3px;font-size:28px;color:#1f211f;letter-spacing:0.73px;-webkit-text-stroke:0.3px #1f211f;">customers</span><span class="t" style="left:1279.0px;top:1722.6px;font-size:30px;color:#1f211f;letter-spacing:0.75px;-webkit-text-stroke:0.3px #1f211f;">$750</span><span class="t" style="left:1418.0px;top:1727.2px;font-size:24px;color:#646864;letter-spacing:-1.08px;">17.58%</span><span class="t" style="left:1637.0px;top:1722.6px;font-size:30px;color:#1f211f;letter-spacing:1.4px;-webkit-text-stroke:0.3px #1f211f;">$2.4K</span><span class="t" style="left:1776.0px;top:1727.2px;font-size:24px;color:#646864;letter-spacing:-1.08px;">20.77%</span><span class="t" style="left:1995.0px;top:1722.6px;font-size:30px;color:#1f211f;letter-spacing:1.4px;-webkit-text-stroke:0.3px #1f211f;">$700</span><span class="t" style="left:2134.0px;top:1727.2px;font-size:24px;color:#646864;letter-spacing:-1.42px;">12.87%</span><span class="t" style="left:2352.0px;top:1722.6px;font-size:30px;color:#1f211f;letter-spacing:0.75px;-webkit-text-stroke:0.3px #1f211f;">$750</span><span class="t" style="left:2491.0px;top:1727.2px;font-size:24px;color:#646864;letter-spacing:-1.08px;">15.66%</span><span class="t" style="left:2710.0px;top:1722.6px;font-size:30px;color:#1f211f;letter-spacing:-2.1px;-webkit-text-stroke:0.3px #1f211f;">$1.4K</span><span class="t" style="left:2849.0px;top:1727.2px;font-size:24px;color:#646864;letter-spacing:-1.08px;">12.53%</span><span class="t" style="left:3068.0px;top:1722.6px;font-size:30px;color:#1f211f;letter-spacing:1.75px;-webkit-text-stroke:0.3px #1f211f;">$300</span><span class="t" style="left:3207.0px;top:1727.2px;font-size:24px;color:#646864;letter-spacing:-1.08px;">18.45%</span><div class="abs" style="left:592px;top:1810px;width:32px;height:32px;background:#ff8a7a;border-radius:8px;"><svg width="32" height="32" viewBox="0 0 32 32" style="position:absolute;left:0;top:0"><path d="M9.4 16.4 L14.6 21.4 L24.2 11.2" fill="none" stroke="#fff" stroke-width="4.2" stroke-linecap="round" stroke-linejoin="round"/></svg></div><span class="t" style="left:657.0px;top:1813.3px;font-size:28px;color:#1f211f;letter-spacing:0.48px;-webkit-text-stroke:0.3px #1f211f;">shipping</span><span class="t" style="left:1279.0px;top:1810.6px;font-size:30px;color:#1f211f;letter-spacing:-0.7px;-webkit-text-stroke:0.3px #1f211f;">$3K</span><span class="t" style="left:1418.0px;top:1815.2px;font-size:24px;color:#646864;letter-spacing:-1.08px;">12.41%</span><span class="t" style="left:1637.0px;top:1810.6px;font-size:30px;color:#1f211f;letter-spacing:1.4px;-webkit-text-stroke:0.3px #1f211f;">$400</span><span class="t" style="left:1776.0px;top:1815.2px;font-size:24px;color:#646864;letter-spacing:-1.08px;">14.09%</span><span class="t" style="left:1995.0px;top:1810.6px;font-size:30px;color:#1f211f;letter-spacing:1.75px;-webkit-text-stroke:0.3px #1f211f;">$300</span><span class="t" style="left:2134.0px;top:1815.2px;font-size:24px;color:#646864;letter-spacing:-1.08px;">21.56%</span><span class="t" style="left:2352.0px;top:1810.6px;font-size:30px;color:#1f211f;letter-spacing:-0.6px;-webkit-text-stroke:0.3px #1f211f;">$2.5K</span><span class="t" style="left:2491.0px;top:1815.2px;font-size:24px;color:#646864;letter-spacing:-1.08px;">12.98%</span><span class="t" style="left:2710.0px;top:1810.6px;font-size:30px;color:#1f211f;letter-spacing:-2.1px;-webkit-text-stroke:0.3px #1f211f;">$1.4K</span><span class="t" style="left:2849.0px;top:1815.2px;font-size:24px;color:#646864;letter-spacing:-1.08px;">19.26%</span><span class="t" style="left:3068.0px;top:1810.6px;font-size:30px;color:#1f211f;letter-spacing:-0.6px;-webkit-text-stroke:0.3px #1f211f;">$2.5K</span><span class="t" style="left:3207.0px;top:1815.2px;font-size:24px;color:#646864;letter-spacing:-1.08px;">18.23%</span><div class="abs" style="left:592px;top:1898px;width:32px;height:32px;background:#7485ff;border-radius:8px;"><svg width="32" height="32" viewBox="0 0 32 32" style="position:absolute;left:0;top:0"><path d="M9.4 16.4 L14.6 21.4 L24.2 11.2" fill="none" stroke="#fff" stroke-width="4.2" stroke-linecap="round" stroke-linejoin="round"/></svg></div><span class="t" style="left:657.0px;top:1901.3px;font-size:28px;color:#1f211f;letter-spacing:0.83px;-webkit-text-stroke:0.3px #1f211f;">finance</span><span class="t" style="left:1279.0px;top:1898.6px;font-size:30px;color:#1f211f;letter-spacing:-2.2px;-webkit-text-stroke:0.3px #1f211f;">$1K</span><span class="t" style="left:1418.0px;top:1903.2px;font-size:24px;color:#646864;letter-spacing:-0.28px;">24.34%</span><span class="t" style="left:1637.0px;top:1898.6px;font-size:30px;color:#1f211f;letter-spacing:1.08px;-webkit-text-stroke:0.3px #1f211f;">$250</span><span class="t" style="left:1776.0px;top:1903.2px;font-size:24px;color:#646864;letter-spacing:-1.08px;">17.07%</span><span class="t" style="left:1995.0px;top:1898.6px;font-size:30px;color:#1f211f;letter-spacing:1.4px;-webkit-text-stroke:0.3px #1f211f;">$350</span><span class="t" style="left:2134.0px;top:1903.2px;font-size:24px;color:#646864;letter-spacing:-2.28px;">13.14%</span><span class="t" style="left:2352.0px;top:1898.6px;font-size:30px;color:#1f211f;letter-spacing:1.75px;-webkit-text-stroke:0.3px #1f211f;">$300</span><span class="t" style="left:2491.0px;top:1903.2px;font-size:24px;color:#646864;letter-spacing:-1.08px;">15.34%</span><span class="t" style="left:2710.0px;top:1898.6px;font-size:30px;color:#1f211f;letter-spacing:1.75px;-webkit-text-stroke:0.3px #1f211f;">$900</span><span class="t" style="left:2849.0px;top:1903.2px;font-size:24px;color:#646864;letter-spacing:-1.08px;">15.82%</span><span class="t" style="left:3068.0px;top:1898.6px;font-size:30px;color:#1f211f;letter-spacing:-2.2px;-webkit-text-stroke:0.3px #1f211f;">$1K</span><span class="t" style="left:3207.0px;top:1903.2px;font-size:24px;color:#646864;letter-spacing:-1.08px;">19.34%</span></div></section></main><div class="abs popups"><div class="abs" role="menu"><div class="abs" style="left:993px;top:1343px;width:424px;height:154px;background:#fff;border-radius:13px;box-shadow:0 0 0 2px rgba(0,0,0,.06),0 8px 16px -4px rgba(0,0,0,.22),0 18px 40px rgba(0,0,0,.07);"></div><div class="abs" style="left:1004px;top:1422px;width:402px;height:64px;background:#f0f0f0;border-radius:10px;"></div><span class="t" style="left:1028.8px;top:1373.1px;font-size:28px;color:#1f211f;letter-spacing:0.75px;-webkit-text-stroke:0.3px #1f211f;">Service Accounts</span><span class="t" style="left:1028.8px;top:1441.0px;font-size:28px;color:#1f211f;letter-spacing:0.71px;-webkit-text-stroke:0.3px #1f211f;">Service Account Labels</span><svg class="ic" style="left:1366px;top:1376px" width="12" height="20" viewBox="0 0 12 20" ><path d="M1.6 1.6 L10.4 10 L1.6 18.4" fill="none" stroke="#777" stroke-width="2.8" stroke-linecap="round" stroke-linejoin="round"/></svg><svg class="ic" style="left:1364px;top:1444px" width="12" height="20" viewBox="0 0 12 20" ><path d="M1.6 1.6 L10.4 10 L1.6 18.4" fill="none" stroke="#777" stroke-width="2.8" stroke-linecap="round" stroke-linejoin="round"/></svg></div><div class="abs" role="menu"><div class="abs" style="left:1427px;top:1413px;width:342px;height:426px;background:#fff;border-radius:13px;box-shadow:0 0 0 2px rgba(0,0,0,.06),0 8px 16px -4px rgba(0,0,0,.22),0 18px 40px rgba(0,0,0,.07);"></div><div class="abs" style="left:1438px;top:1424px;width:320px;height:64px;background:#f0f0f0;border-radius:10px;"></div><div class="abs" style="left:1470px;top:1448px;width:16px;height:16px;background:#7485ff;border-radius:50%;"></div><span class="t" style="left:1519.0px;top:1442.6px;font-size:28px;color:#1f211f;letter-spacing:0.57px;-webkit-text-stroke:0.3px #1f211f;">domain</span><svg class="ic" style="left:1715.5px;top:1446px" width="12" height="20" viewBox="0 0 12 20" ><path d="M1.6 1.6 L10.4 10 L1.6 18.4" fill="none" stroke="#777" stroke-width="2.8" stroke-linecap="round" stroke-linejoin="round"/></svg><div class="abs" style="left:1470px;top:1516px;width:16px;height:16px;background:#fdb64b;border-radius:50%;"></div><span class="t" style="left:1519.0px;top:1510.6px;font-size:28px;color:#1f211f;letter-spacing:0.49px;-webkit-text-stroke:0.3px #1f211f;">geo</span><svg class="ic" style="left:1717.5px;top:1514px" width="12" height="20" viewBox="0 0 12 20" ><path d="M1.6 1.6 L10.4 10 L1.6 18.4" fill="none" stroke="#777" stroke-width="2.8" stroke-linecap="round" stroke-linejoin="round"/></svg><div class="abs" style="left:1470px;top:1584px;width:16px;height:16px;background:#d5caa5;border-radius:50%;"></div><span class="t" style="left:1519.0px;top:1578.6px;font-size:28px;color:#1f211f;letter-spacing:0.59px;-webkit-text-stroke:0.3px #1f211f;">environment</span><svg class="ic" style="left:1717.5px;top:1582px" width="12" height="20" viewBox="0 0 12 20" ><path d="M1.6 1.6 L10.4 10 L1.6 18.4" fill="none" stroke="#777" stroke-width="2.8" stroke-linecap="round" stroke-linejoin="round"/></svg><div class="abs" style="left:1470px;top:1652px;width:16px;height:16px;background:#7cf266;border-radius:50%;"></div><span class="t" style="left:1519.0px;top:1646.6px;font-size:28px;color:#1f211f;letter-spacing:0.59px;-webkit-text-stroke:0.3px #1f211f;">purpose</span><svg class="ic" style="left:1717.5px;top:1650px" width="12" height="20" viewBox="0 0 12 20" ><path d="M1.6 1.6 L10.4 10 L1.6 18.4" fill="none" stroke="#777" stroke-width="2.8" stroke-linecap="round" stroke-linejoin="round"/></svg><div class="abs" style="left:1470px;top:1720px;width:16px;height:16px;background:#656a68;border-radius:50%;"></div><span class="t" style="left:1519.0px;top:1714.6px;font-size:28px;color:#1f211f;letter-spacing:1.21px;-webkit-text-stroke:0.3px #1f211f;">cost-center</span><svg class="ic" style="left:1717.5px;top:1718px" width="12" height="20" viewBox="0 0 12 20" ><path d="M1.6 1.6 L10.4 10 L1.6 18.4" fill="none" stroke="#777" stroke-width="2.8" stroke-linecap="round" stroke-linejoin="round"/></svg><div class="abs" style="left:1470px;top:1788px;width:16px;height:16px;background:#ff8677;border-radius:50%;"></div><span class="t" style="left:1519.0px;top:1782.6px;font-size:28px;color:#1f211f;letter-spacing:0.97px;-webkit-text-stroke:0.3px #1f211f;">application</span><svg class="ic" style="left:1717.5px;top:1786px" width="12" height="20" viewBox="0 0 12 20" ><path d="M1.6 1.6 L10.4 10 L1.6 18.4" fill="none" stroke="#777" stroke-width="2.8" stroke-linecap="round" stroke-linejoin="round"/></svg></div><div class="abs" role="menu"><div class="abs" style="left:1779px;top:1416px;width:366px;height:557px;background:#fff;border-radius:13px;box-shadow:0 0 0 2px rgba(0,0,0,.06),0 8px 16px -4px rgba(0,0,0,.22),0 18px 40px rgba(0,0,0,.07);overflow:hidden;"><div class="abs" style="left:0;top:0;width:366px;height:62px;background:#f8f8f8;border-bottom:2px solid #e4e4e4"></div></div><div class="abs" style="left:1814px;top:1430px;width:32px;height:32px;background:#fff;border-radius:8px;box-shadow:inset 0 0 0 2px #8c8c8c;"><i class="abs" style="left:8px;top:14px;width:16px;height:4px;border-radius:2px;background:#8c8c8c"></i></div><span class="t" style="left:1870.7px;top:1437.6px;font-size:19px;color:#666a66;letter-spacing:1.47px;-webkit-text-stroke:0.3px #666a66;">SELECT ALL</span><div class="abs" style="left:1790px;top:1762px;width:344px;height:64px;background:#f0f0f0;border-radius:10px;"></div><div class="abs" style="left:1814px;top:1506px;width:32px;height:32px;background:#fff;border-radius:8px;box-shadow:inset 0 0 0 2px #8c8c8c;"></div><span class="t" style="left:1870.7px;top:1508.6px;font-size:28px;color:#1f211f;letter-spacing:0.73px;-webkit-text-stroke:0.3px #1f211f;">payments</span><div class="abs" style="left:1814px;top:1574px;width:32px;height:32px;background:#fff;border-radius:8px;box-shadow:inset 0 0 0 2px #8c8c8c;"></div><span class="t" style="left:1870.7px;top:1576.6px;font-size:28px;color:#1f211f;letter-spacing:0.24px;-webkit-text-stroke:0.3px #1f211f;">orders</span><div class="abs" style="left:1814px;top:1642px;width:32px;height:32px;background:#fff;border-radius:8px;box-shadow:inset 0 0 0 2px #8c8c8c;"></div><span class="t" style="left:1870.7px;top:1644.6px;font-size:28px;color:#1f211f;letter-spacing:0.66px;-webkit-text-stroke:0.3px #1f211f;">inventory</span><div class="abs" style="left:1814px;top:1710px;width:32px;height:32px;background:#fff;border-radius:8px;box-shadow:inset 0 0 0 2px #8c8c8c;"></div><span class="t" style="left:1870.7px;top:1712.6px;font-size:28px;color:#1f211f;letter-spacing:0.71px;-webkit-text-stroke:0.3px #1f211f;">customers</span><div class="abs" style="left:1814px;top:1778px;width:32px;height:32px;background:#1f211f;border-radius:8px;"><svg width="32" height="32" viewBox="0 0 32 32" style="position:absolute;left:0;top:0"><path d="M9.4 16.4 L14.6 21.4 L24.2 11.2" fill="none" stroke="#fff" stroke-width="4.2" stroke-linecap="round" stroke-linejoin="round"/></svg></div><span class="t" style="left:1870.7px;top:1780.6px;font-size:28px;color:#1f211f;letter-spacing:0.48px;-webkit-text-stroke:0.3px #1f211f;">shipping</span><div class="abs" style="left:1814px;top:1846px;width:32px;height:32px;background:#fff;border-radius:8px;box-shadow:inset 0 0 0 2px #8c8c8c;"></div><span class="t" style="left:1870.7px;top:1848.6px;font-size:28px;color:#1f211f;letter-spacing:0.83px;-webkit-text-stroke:0.3px #1f211f;">finance</span><div class="abs" style="left:1814px;top:1914px;width:32px;height:32px;background:#fff;border-radius:8px;box-shadow:inset 0 0 0 2px #8c8c8c;"></div><span class="t" style="left:1870.7px;top:1916.6px;font-size:28px;color:#1f211f;letter-spacing:1.06px;-webkit-text-stroke:0.3px #1f211f;">N/A</span></div><svg class="ic" style="left:2050px;top:1768px" width="36" height="40" viewBox="0 0 36 40" overflow="visible"><g style="filter:drop-shadow(0 2px 2.5px rgba(0,0,0,.4))"><path d="M8.3 6.6 C8 4.4 12.4 3 13.4 5.6 L17.4 15.4 C18.8 12.6 22.2 12.6 22.8 15 C24.2 13.2 27.4 13.6 27.8 16 C29.4 14.8 32 16 32.2 18.8 L32 24 C31.8 28 30 31.5 28.2 36 L12.8 36 C10 31 6 27 3.2 22.4 C1.6 19.6 3.8 16.6 6.6 17 C8.2 17.2 9.8 19 10.8 20.6 Z" fill="#fff" stroke="#111" stroke-width="2" stroke-linejoin="round"/><path d="M17.4 22.5 V30 M21.2 22.5 V30 M25.2 22.5 V30" stroke="#111" stroke-width="1.7" fill="none"/></g></svg></div>
</div>
<script>(function(){var a=document.getElementById("app");function f(){var w=window.innerWidth||3456;var s=w/3456;var b=document.body;if(Math.abs(s-1)>0.001){a.style.transform="scale("+s+")";b.style.width=(3456*s)+"px";b.style.height=(2278*s)+"px";}else{a.style.transform="none";b.style.width="3456px";b.style.height="2278px";}}f();window.addEventListener("resize",f);})();</script>
</body></html>
